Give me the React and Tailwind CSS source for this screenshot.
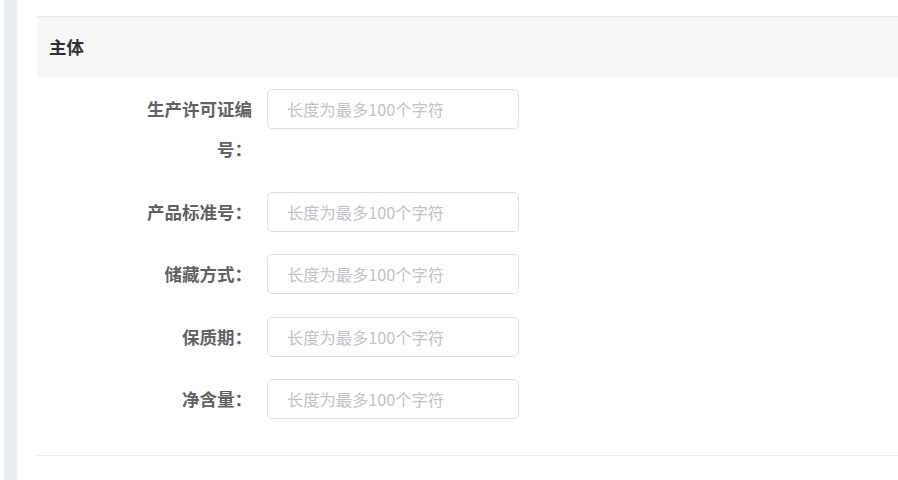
import React from "react";

const rows = [
  "生产许可证编号：",
  "产品标准号：",
  "储藏方式：",
  "保质期：",
  "净含量：",
];

export default function App() {
  return (
    <div
      className="flex w-[898px] h-[480px] overflow-hidden bg-white"
      style={{ fontFamily: '"Noto Sans CJK SC", "Noto Sans", sans-serif' }}
    >
      <div className="w-[4px] shrink-0 bg-white" />
      <div className="w-[13px] shrink-0 bg-[#e9eef2]" />
      <div className="w-[20px] shrink-0" />
      <div className="flex-1 pt-[16px] min-w-0">
        <div className="border-t border-[#e6e9f2] bg-[#f7f7f7] h-[61px] flex items-center pl-[12px]">
          <span className="text-[17.5px] font-bold text-[#303133] leading-none">主体</span>
        </div>
        <div className="pt-[12px] pb-[36px] border-b border-[#ebedf2] flex flex-col gap-[22.5px]">
          {rows.map((label) => (
            <div key={label} className="flex items-start">
              <div className="w-[80px] shrink-0" />
              <label className="w-[150px] shrink-0 pr-[15px] text-right text-[17.5px] leading-[40px] font-bold text-[#606266]">
                {label}
              </label>
              <input
                className="w-[252px] h-[40px] border border-[#dcdfe6] rounded-[5px] px-[19px] text-[16.25px] placeholder:text-[#c0c4cc] outline-none"
                placeholder="长度为最多100个字符"
              />
            </div>
          ))}
        </div>
      </div>
    </div>
  );
}
